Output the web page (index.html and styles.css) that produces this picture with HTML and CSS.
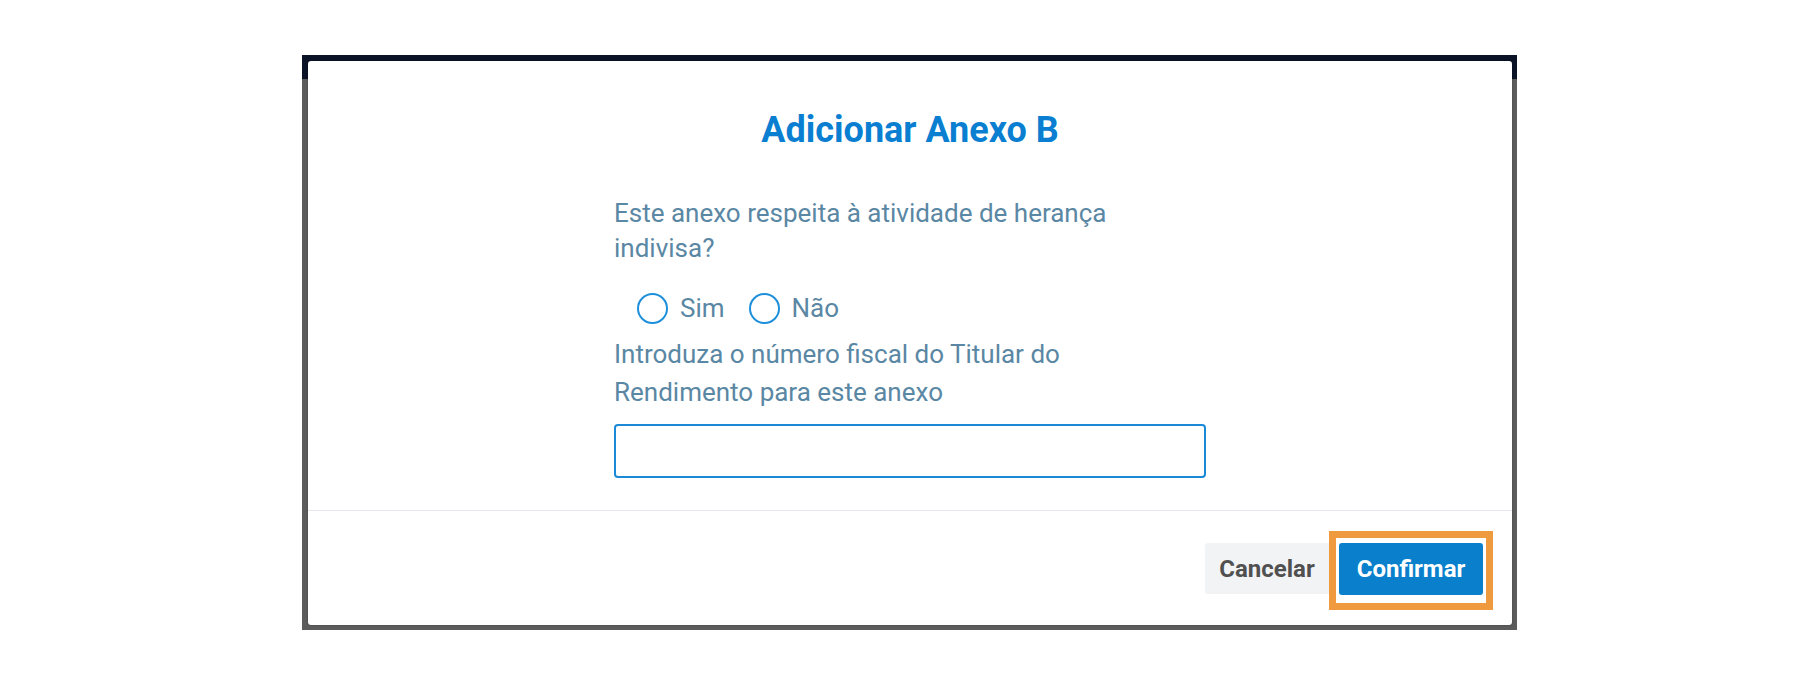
FILE: index.html
```html
<!DOCTYPE html>
<html lang="pt">
<head>
<meta charset="utf-8">
<title>Adicionar Anexo B</title>
<link rel="stylesheet" href="styles.css">
</head>
<body>
<div class="frame">
  <div class="modal">
    <div class="modal-body">
      <h1 class="title">Adicionar Anexo B</h1>
      <div class="content">
        <p class="question">Este anexo respeita à atividade de herança indivisa?</p>
        <div class="radios">
          <label class="radio"><span class="circle"></span><span>Sim</span></label>
          <label class="radio"><span class="circle"></span><span>Não</span></label>
        </div>
        <p class="label">Introduza o número fiscal do Titular do Rendimento para este anexo</p>
        <input class="field" type="text">
      </div>
    </div>
    <div class="modal-footer">
      <button class="btn btn-cancel">Cancelar</button>
      <span class="highlight"><button class="btn btn-confirm">Confirmar</button></span>
    </div>
  </div>
</div>
</body>
</html>
```

FILE: styles.css
```css
html, body {
  margin: 0;
  padding: 0;
  background: #ffffff;
}

body {
  font-family: Roboto, "Liberation Sans", Arial, sans-serif;
}

.frame {
  margin: 55px 0 0 302px;
  width: 1215px;
  height: 575px;
  box-sizing: border-box;
  padding: 6px 5px 5px 6px;
  background: linear-gradient(#0b1326 0, #0b1326 24px, #5c5c5c 24px, #5c5c5c 100%);
}

.modal {
  width: 1204px;
  height: 564px;
  background: #ffffff;
  border-radius: 3px;
  display: flex;
  flex-direction: column;
  box-shadow: 0 0 2px rgba(0, 0, 0, 0.35);
}

.modal-body {
  padding-top: 47px;
  height: 450px;
  flex: none;
  box-sizing: border-box;
  border-bottom: 1px solid #e4e7eb;
}

.title {
  margin: 0;
  text-align: center;
  font-size: 36px;
  line-height: 44px;
  font-weight: 700;
  color: #0a7fd1;
}

.content {
  margin: 44px 0 0 306px;
  width: 592px;
}

.question {
  margin: 0;
  width: 500px;
  font-size: 26px;
  line-height: 35px;
  color: #5a87a3;
}

.label {
  margin: 11px 0 0;
  width: 500px;
  font-size: 26px;
  line-height: 38px;
  color: #5a87a3;
}

.radios {
  display: flex;
  gap: 24px;
  padding-left: 23px;
  margin-top: 26px;
  height: 32px;
}

.radio {
  display: flex;
  align-items: center;
  gap: 12px;
  font-size: 26px;
  line-height: 32px;
  color: #5a87a3;
}

.circle {
  width: 31px;
  height: 31px;
  box-sizing: border-box;
  border: 2.5px solid #1e8fdb;
  border-radius: 50%;
}

.field {
  display: block;
  margin-top: 13px;
  width: 592px;
  height: 54px;
  box-sizing: border-box;
  border: 2px solid #1a8ad8;
  border-radius: 4px;
  outline: none;
  background: #ffffff;
}

.modal-footer {
  flex: 1;
  display: flex;
  justify-content: flex-end;
  align-items: flex-start;
  padding: 20px 19px 0 0;
}

.btn {
  font-family: Roboto, "Liberation Sans", Arial, sans-serif;
  font-weight: 700;
  font-size: 24px;
  border: none;
  cursor: pointer;
  padding: 0;
}

.btn-cancel {
  width: 124px;
  height: 51px;
  margin-top: 12px;
  background: #f2f3f5;
  color: #505050;
  border-radius: 3px 0 0 3px;
}

.highlight {
  display: block;
  border: 7px solid #f09a40;
  padding: 5px 3px 8px 3px;
  background: #ffffff;
}

.btn-confirm {
  display: block;
  width: 144px;
  height: 52px;
  background: #0a7fcc;
  color: #ffffff;
  border-radius: 3px;
}
```
